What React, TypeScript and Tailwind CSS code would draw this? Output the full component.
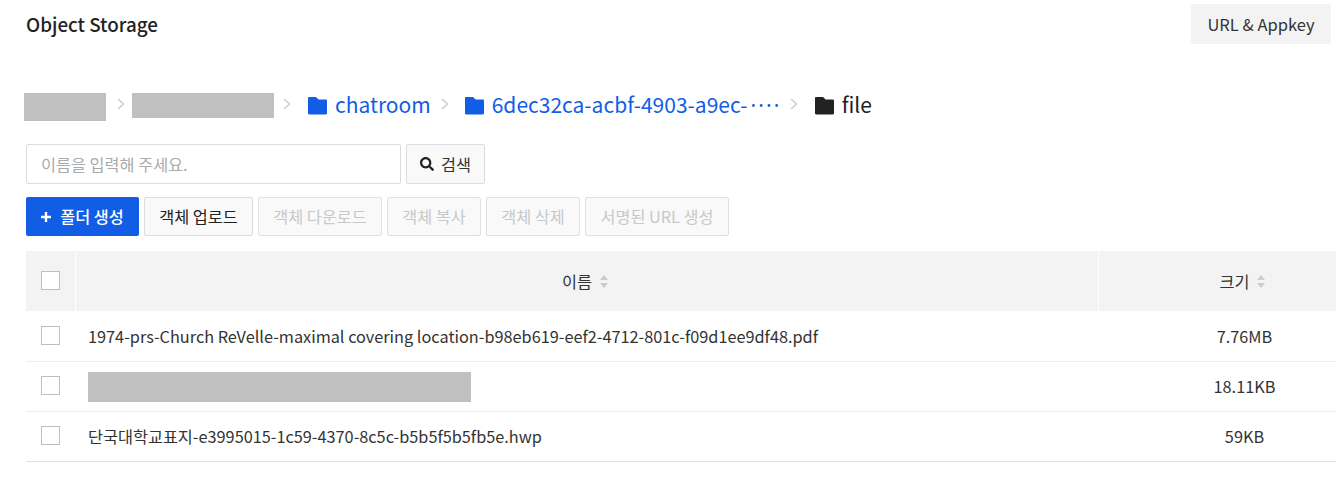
import { FaSearch } from "react-icons/fa"

function FolderIcon({ className }: { className: string }) {
  return (
    <svg viewBox="0 0 19 18" className={className} fill="currentColor">
      <path d="M0 1.2C0 .5.5 0 1.2 0H8l2.6 2.6h7.2c.7 0 1.2.5 1.2 1.2v12.4c0 .7-.5 1.2-1.2 1.2H1.2C.5 17.4 0 16.9 0 16.2V1.2z" />
    </svg>
  )
}

function Chevron({ className }: { className: string }) {
  return (
    <svg viewBox="0 0 8 12" className={`h-3 w-2 shrink-0 ${className}`} fill="none" stroke="#cccccc" strokeWidth="1.4">
      <path d="M1 1l5.5 5L1 11" />
    </svg>
  )
}

function SortIcon() {
  return (
    <svg viewBox="0 0 8 13" className="ml-2 h-[13px] w-2" fill="#cccccc">
      <path d="M4 0l4 5H0zM4 13L0 8h8z" />
    </svg>
  )
}

function Checkbox() {
  return <span className="block h-[19px] w-[19px] border border-[#bfbfbf] bg-white" />
}

const disabledButtons = [
  { label: "객체 다운로드", width: "w-[124px]" },
  { label: "객체 복사", width: "w-[94px]" },
  { label: "객체 삭제", width: "w-[94px]" },
  { label: "서명된 URL 생성", width: "w-[144px]" },
]

const rows = [
  { name: "1974-prs-Church ReVelle-maximal covering location-b98eb619-eef2-4712-801c-f09d1ee9df48.pdf", size: "7.76MB", height: "h-[51px]" },
  { name: "", size: "18.11KB", height: "h-[50px]" },
  { name: "단국대학교표지-e3995015-1c59-4370-8c5c-b5b5f5b5fb5e.hwp", size: "59KB", height: "h-[50px]" },
]

export default function App() {
  return (
    <div className="h-[499px] w-[1336px] overflow-hidden bg-white pl-[26px] font-['Noto_Sans_CJK_KR','Noto_Sans',sans-serif] text-[16.3px] text-[#222222]">
      {/* Title */}
      <div className="flex items-start justify-between pr-[5px] pt-1">
        <h1 className="mt-[6px] text-[18.8px] leading-[28px] font-medium">Object Storage</h1>
        <button className="h-10 w-[140px] rounded-[2px] bg-[#f3f3f3] text-[16.5px] leading-[38px] text-[#333333]">URL &amp; Appkey</button>
      </div>

      {/* Breadcrumb */}
      <div className="mt-[49px] -ml-[2px] flex h-7 items-start text-[21px] leading-[22px]">
        <div className="h-7 w-[82px] bg-[#c0c0c0]" />
        <Chevron className="mt-[5px] ml-[11px]" />
        <div className="ml-[7px] h-[25px] w-[142px] bg-[#c0c0c0]" />
        <Chevron className="mt-[5px] ml-[9px]" />
        <FolderIcon className="mt-[4px] ml-[17px] h-[18px] w-[19px] text-[#125de6]" />
        <span className="ml-2 text-[#125de6]">chatroom</span>
        <Chevron className="mt-[5px] ml-[10px]" />
        <FolderIcon className="mt-[4px] ml-[16px] h-[18px] w-[19px] text-[#125de6]" />
        <span className="ml-2 w-[281px] whitespace-nowrap text-[#125de6]">
          6dec32ca-acbf-4903-a9ec-<span className="tracking-[-4px]">····</span>
        </span>
        <Chevron className="mt-[5px] ml-[17px]" />
        <FolderIcon className="mt-[4px] ml-[17px] h-[18px] w-[19px] text-[#222222]" />
        <span className="ml-2">file</span>
      </div>

      {/* Search */}
      <div className="mt-[23px] flex gap-[5px]">
        <input
          className="h-10 w-[375px] rounded-[2px] border border-[#dddddd] px-[14px] placeholder:text-[#aaaaaa]"
          placeholder="이름을 입력해 주세요."
          readOnly
        />
        <button className="flex h-10 w-[79px] items-center justify-center gap-[7px] rounded-[2px] border border-[#dddddd] bg-[#f9f9f9] text-[#333333]">
          <FaSearch className="h-[14px] w-[14px] text-[#222222]" />
          검색
        </button>
      </div>

      {/* Actions */}
      <div className="mt-[13px] flex gap-[5px]">
        <button className="flex h-[39px] w-[113px] items-center justify-center gap-[9px] rounded-[2px] bg-[#125de6] font-medium text-white">
          <svg viewBox="0 0 10 10" className="h-[10px] w-[10px]" fill="white">
            <path d="M3.8 0h2.4v3.8H10v2.4H6.2V10H3.8V6.2H0V3.8h3.8z" />
          </svg>
          폴더 생성
        </button>
        <button className="h-[39px] w-[109px] rounded-[2px] border border-[#dddddd] bg-[#f9f9f9] text-[#222222]">객체 업로드</button>
        {disabledButtons.map((b) => (
          <button key={b.label} className={`h-[39px] rounded-[2px] border border-[#e0e0e0] bg-[#f9f9f9] text-[#c8c8c8] ${b.width}`}>
            {b.label}
          </button>
        ))}
      </div>

      {/* Table */}
      <div className="mt-[15px] text-[#333333]">
        <div className="flex h-[60px] gap-px bg-white">
          <div className="flex w-[49px] justify-center bg-[#f3f3f3] pt-5">
            <Checkbox />
          </div>
          <div className="flex w-[1022px] items-center justify-center bg-[#f3f3f3] pr-1">
            이름
            <SortIcon />
          </div>
          <div className="flex flex-1 items-center justify-center bg-[#f3f3f3] pl-[50px]">
            크기
            <SortIcon />
          </div>
        </div>
        {rows.map((row) => (
          <div key={row.size} className={`flex items-center border-b border-[#eeeeee] last:border-[#e2e2e2] ${row.height}`}>
            <div className="flex w-[49px] justify-center pb-[2px]">
              <Checkbox />
            </div>
            <div className="w-[1074px] pl-[13px]">
              {row.name ? row.name : <div className="h-[30px] w-[383px] bg-[#c0c0c0]" />}
            </div>
            <div className="flex-1 pl-1 text-center">{row.size}</div>
          </div>
        ))}
      </div>
    </div>
  )
}
